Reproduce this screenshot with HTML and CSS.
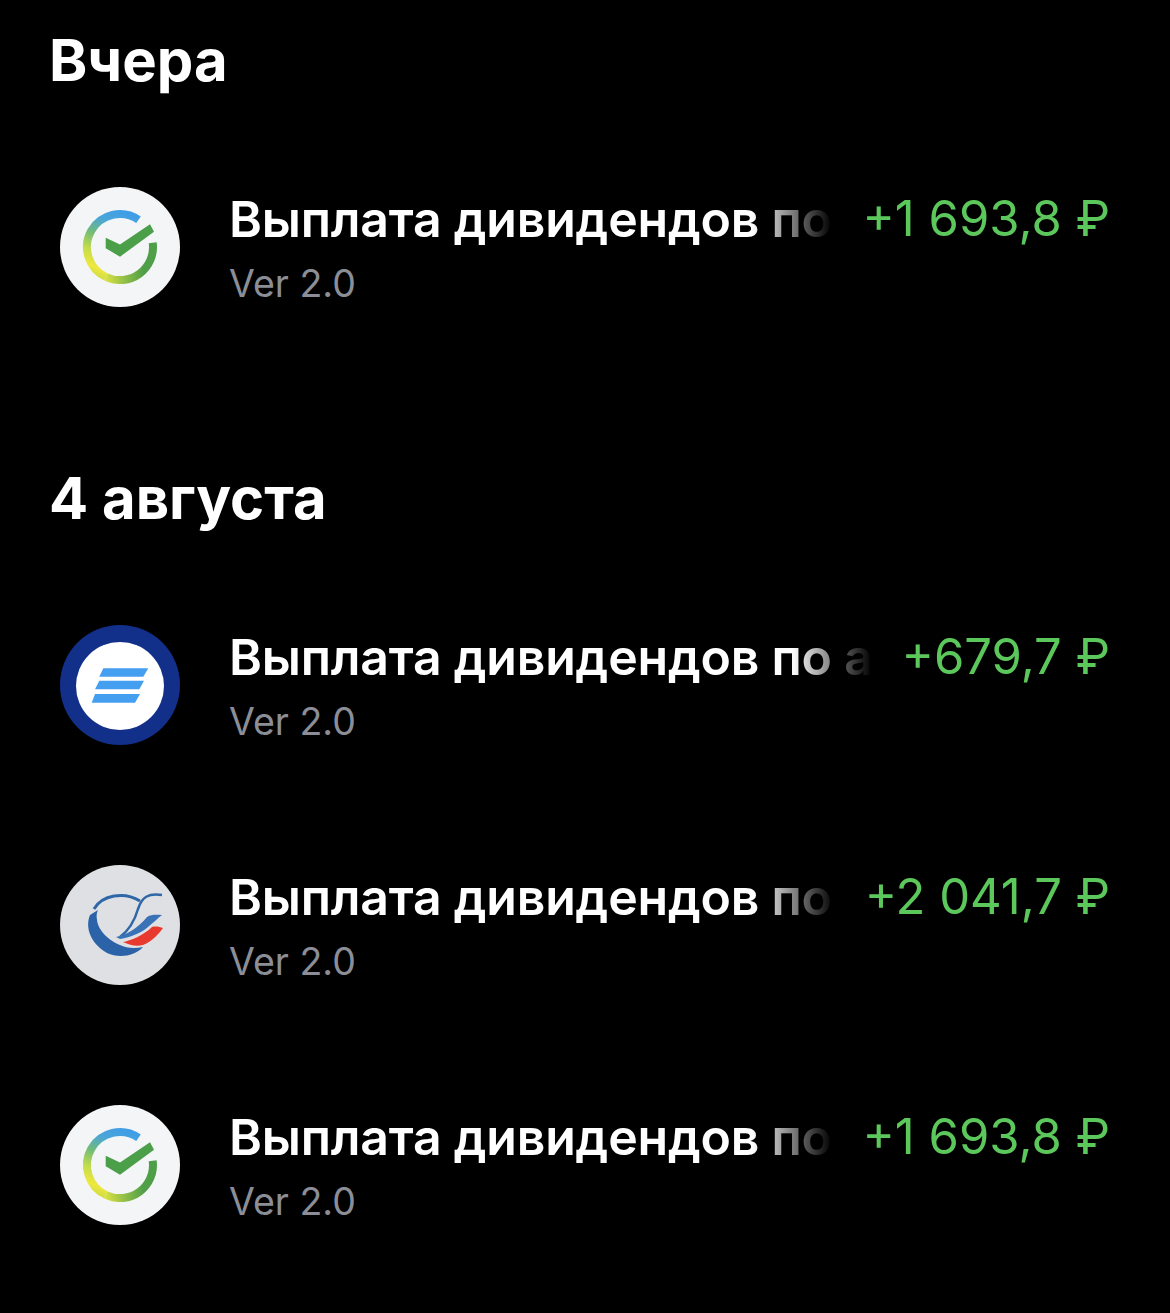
FILE: index.html
```html
<!DOCTYPE html>
<html lang="ru">
<head>
    <meta charset="UTF-8">
    <meta name="viewport" content="width=device-width, initial-scale=1.0">
    <title>Операции</title>
    <link rel="stylesheet" href="styles.css">
</head>

<body>
    <svg class="defs" width="0" height="0" aria-hidden="true">
        <defs>
            <linearGradient id="sber-left" gradientUnits="userSpaceOnUse" x1="72" y1="26" x2="48" y2="92">
                <stop offset="0" stop-color="#3f9de8"/>
                <stop offset="0.22" stop-color="#4aa6d8"/>
                <stop offset="0.45" stop-color="#72bb78"/>
                <stop offset="0.68" stop-color="#c2dc4c"/>
                <stop offset="0.9" stop-color="#efe83e"/>
                <stop offset="1" stop-color="#d6e044"/>
            </linearGradient>
            <linearGradient id="sber-right" gradientUnits="userSpaceOnUse" x1="46" y1="90" x2="84" y2="84">
                <stop offset="0" stop-color="#d6e044"/>
                <stop offset="0.5" stop-color="#8cbc48"/>
                <stop offset="1" stop-color="#4e9f48"/>
            </linearGradient>
            <symbol id="sber" viewBox="0 0 120 120">
                <circle cx="60" cy="60" r="60" fill="#f4f5f7"/>
                <path d="M78.5 32.8A33 33 0 1 0 46 90" fill="none" stroke="url(#sber-left)" stroke-width="8"/>
                <path d="M46 90A33 33 0 0 0 92.7 55.7" fill="none" stroke="url(#sber-right)" stroke-width="8"/>
                <path d="M45.7 50.7L60 57.5L90 37.3L94 44.7L60 69.7L45.7 61.3Z" fill="#4a9f48"/>
            </symbol>
        </defs>
    </svg>

    <section class="day">
        <h2>Вчера</h2>
        <div class="op">
            <svg class="logo"><use href="#sber"/></svg>
            <div class="op-text">
                <div class="op-title">Выплата дивидендов по акциям</div>
                <div class="op-sub">Ver 2.0</div>
            </div>
            <div class="op-sum">+1 693,8 ₽</div>
        </div>
    </section>

    <section class="day">
        <h2>4 августа</h2>
        <div class="op">
            <svg class="logo" viewBox="0 0 120 120">
                <circle cx="60" cy="60" r="60" fill="#12308a"/>
                <circle cx="60" cy="61" r="44" fill="#fff"/>
                <path d="M43.3 43.3H88.3L83.3 51.7H39.3ZM39.3 55.7H84L79.3 64.3H35ZM35 69H80L75 77.7H31.7Z" fill="#459ff0"/>
            </svg>
            <div class="op-text">
                <div class="op-title">Выплата дивидендов по акциям</div>
                <div class="op-sub">Ver 2.0</div>
            </div>
            <div class="op-sum">+679,7 ₽</div>
        </div>
        <div class="op">
            <svg class="logo" viewBox="0 0 120 120">
                <circle cx="60" cy="60" r="60" fill="#dfe0e3"/>
                <path d="M30 50C25 62 30 78 47 88C58 93 74 92 83 82C74 84 66 83 60 80C50 76 38 66 37 55C36 50 37 47 38 45Z" fill="#2b62a8"/>
                <path d="M34 44C42 30 64 26 80 36" fill="none" stroke="#2f67a8" stroke-width="3"/>
                <path d="M102 30C88 28 82 32 78 44C74 58 68 66 60 72" fill="none" stroke="#2f67a8" stroke-width="2.5"/>
                <path d="M56 72C66 70 78 63 87 52C92 49 97 50 102 50C98 53 93 58 88 62C81 68 71 72 60 74Z" fill="#3a72b8"/>
                <path d="M63 77C70 76 84 70 92 62C96 61 100 62 103 63C99 69 91 77 83 80C76 82 70 80 63 77Z" fill="#e8392e"/>
            </svg>
            <div class="op-text">
                <div class="op-title">Выплата дивидендов по акциям</div>
                <div class="op-sub">Ver 2.0</div>
            </div>
            <div class="op-sum">+2 041,7 ₽</div>
        </div>
        <div class="op">
            <svg class="logo"><use href="#sber"/></svg>
            <div class="op-text">
                <div class="op-title">Выплата дивидендов по акциям</div>
                <div class="op-sub">Ver 2.0</div>
            </div>
            <div class="op-sum">+1 693,8 ₽</div>
        </div>
    </section>
</body>
</html>
```

FILE: styles.css
```css
body {
    margin: 0;
    background-color: black;
    color: white;
    font-family: Inter, "Noto Sans", sans-serif;
    min-height: 1313px;
}

.defs {
    display: block;
}

.day {
    padding: 28px 60px 0 49px;
}

.day + .day {
    padding-top: 159px;
}

h2 {
    margin: 0;
    height: 64px;
    line-height: 64px;
    font-size: 58px;
    font-weight: 700;
}

.op {
    display: flex;
    align-items: flex-start;
    height: 120px;
    margin-top: 95px;
    margin-left: 11px;
}

.op + .op {
    margin-top: 120px;
}

.logo {
    flex: none;
    width: 120px;
    height: 120px;
    margin-right: 49px;
}

.op-text {
    flex: 1;
    min-width: 0;
    margin-right: 30px;
}

.op-title {
    margin-top: 2px;
    font-size: 50px;
    line-height: 60px;
    font-weight: 600;
    letter-spacing: -0.2px;
    white-space: nowrap;
    overflow: hidden;
    -webkit-mask-image: linear-gradient(to left, transparent, black 80px);
    mask-image: linear-gradient(to left, transparent, black 80px);
}

.op-sub {
    margin-top: 13px;
    font-size: 37.5px;
    line-height: 44px;
    color: #8b8e96;
}

.op-sum {
    flex: none;
    margin-top: 2px;
    font-size: 49px;
    line-height: 60px;
    color: #5cc85c;
    white-space: nowrap;
}
```
